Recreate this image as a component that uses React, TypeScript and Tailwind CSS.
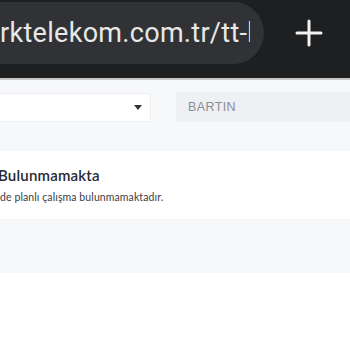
export default function App() {
  return (
    <div className="w-[350px] h-[350px] overflow-hidden bg-white font-['Lato',sans-serif]">
      {/* browser bar */}
      <div className="h-[78px] bg-[#1e1f21] flex items-start">
        <div className="ml-[-40px] mt-[2px] h-[62px] w-[304px] rounded-full bg-[#313235] flex items-center pl-[40px]">
          <div className="w-[250px] overflow-hidden">
            <span className="font-['Roboto',sans-serif] text-[27px] text-[#e8e8e8] whitespace-nowrap tracking-[0.3px]">
              rktelekom.com.tr/tt-haber
            </span>
          </div>
        </div>
        <div className="flex-1 flex justify-center mt-[19px] ml-[4px]">
          <svg width="28" height="28" viewBox="0 0 28 28">
            <path d="M14 2v24M2 14h24" stroke="#f2f2f2" strokeWidth="3" strokeLinecap="round" />
          </svg>
        </div>
      </div>
      <div className="h-[2px] bg-[#c8c8c8]" />
      {/* filters */}
      <div className="bg-[#f7f8fa] pt-[12px] pb-[29px] flex items-center">
        <div className="ml-[-10px] w-[161px] h-[29px] bg-white border border-[#eceef1] rounded-[2px] flex items-center justify-end pr-[8px]">
          <svg width="8" height="5" viewBox="0 0 8 5">
            <path d="M0 0h8L4 5z" fill="#333" />
          </svg>
        </div>
        <div className="ml-[25px] flex-1 h-[30px] bg-[#eef0f3] rounded-l-[2px] flex items-center pl-[12px]">
          <span className="text-[12.5px] text-[#8a8d93] font-['Liberation_Sans',sans-serif] tracking-[0.4px]">BARTIN</span>
        </div>
      </div>
      {/* message card */}
      <div className="bg-white h-[68px] pt-[14px]">
        <div className="ml-[-2px] text-[15px] font-semibold text-[#262a35] leading-[20px] tracking-[0.2px]">Bulunmamakta</div>
        <div className="mt-[5px] text-[10.5px] text-[#3a3d44] leading-[14px] tracking-[0.1px]">de planlı çalışma bulunmamaktadır.</div>
      </div>
      <div className="bg-[#f7f8fa] h-[54px]" />
    </div>
  );
}
